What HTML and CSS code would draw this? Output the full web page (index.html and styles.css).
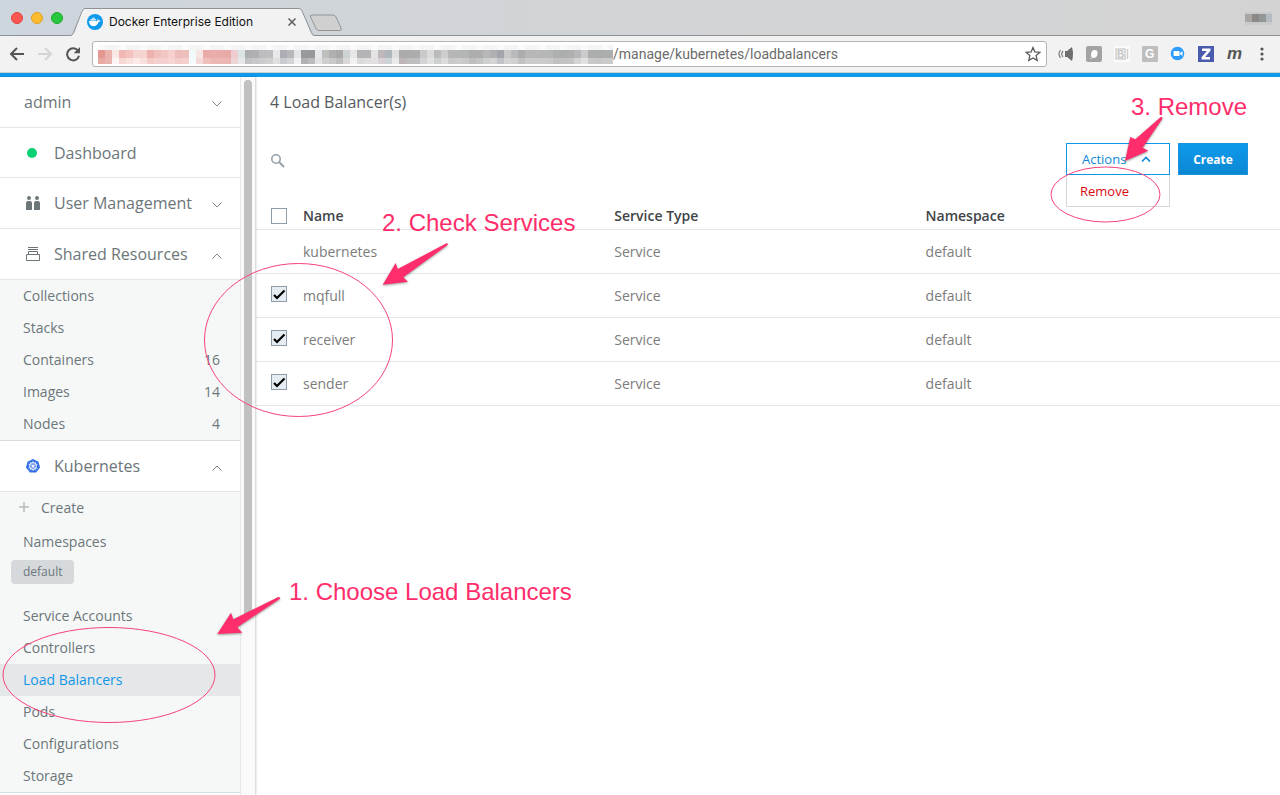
FILE: index.html
```html
<!DOCTYPE html>
<html lang="en">
<head>
<meta charset="utf-8">
<title>Docker Enterprise Edition</title>
<link rel="stylesheet" href="styles.css">
</head>
<body>
<header class="browser">
  <div class="tabstrip">
    <div class="lights"><span class="light red"></span><span class="light yellow"></span><span class="light green"></span></div>
    <div class="tab">
      <svg class="tab-shape" viewBox="0 0 243 28" preserveAspectRatio="none"><path d="M0 27.500C3 27 3.500 25 4.500 22.500L10.500 3.500Q11.500.5 14 .5H228Q230.500.5 231.500 3.500L238.500 22.500Q240 27 243 27.500V28H0Z" fill="#f2f2f2"/><path d="M0 27.500Q1.500 27 2.500 24.500L11 3.500Q12 .5 14 .5H228Q230 .5 231 3L240.500 24.500Q241.500 27.500 243 27.500" fill="none" stroke="#8f9295"/></svg>
      <svg class="favicon" viewBox="0 0 16 16"><circle cx="8" cy="8" r="8" fill="#0f9aec"/><path d="M2 7h8.500q.2-1.500-.3-2.500.8.1 1.300 1.700 1.500-.1 2.300.6-.7 1-2.200 1-1.200 4.400-5.400 4.400Q2.200 12 2 7zM3.300 5.200h5.600v1.300H3.300zM5.200 3.700h2.700v1H5.200z" fill="#fff"/></svg>
      <span class="tab-title">Docker Enterprise Edition</span>
      <button class="tab-close" aria-label="Close tab"><svg viewBox="0 0 8 8"><path d="M.5.5l7 7m0-7l-7 7" stroke="#5c5c5c" stroke-width="1.500"/></svg></button>
    </div>
    <button class="new-tab" aria-label="New tab"><svg viewBox="0 0 34 18"><path d="M3.500 1H24q2 0 3 2l5 11q1 2.500-1 2.500H10q-2 0-3-2L1.500 3Q.5 1 3.500 1z" fill="#d0d0d0" stroke="#929496"/></svg></button>
    <svg class="profile" viewBox="0 0 27 13"><path fill="#c9cacb" d="M0 0h27v13H0z"/><path fill="#a9a5a3" d="M0 2h7v8H0z"/><path fill="#8b8888" d="M7 2h7v8H7z"/><path fill="#949797" d="M14 2h7v8h-7z"/><path fill="#b4bbc0" d="M21 2h6v8h-6z"/></svg>
  </div>
  <div class="toolbar">
    <button class="nav-btn" aria-label="Back"><svg viewBox="0 0 16 16"><path d="M15 8H2.500M8 2L2 8l6 6" fill="none" stroke="#555" stroke-width="2"/></svg></button>
    <button class="nav-btn" aria-label="Forward"><svg viewBox="0 0 16 16"><path d="M1 8h12.500M8 2l6 6-6 6" fill="none" stroke="#d5d5d5" stroke-width="2"/></svg></button>
    <button class="nav-btn" aria-label="Reload"><svg viewBox="0 0 16 16"><path d="M13 4.800A6 6 0 1 0 14 9.800" fill="none" stroke="#555" stroke-width="2"/><path d="M15 1v6.300H8.700z" fill="#555"/></svg></button>
    <div class="omnibox">
      <div class="mosaic" id="mosaic"></div>
      <input class="url" type="text" aria-label="Address" value="/manage/kubernetes/loadbalancers">
      <svg class="star" viewBox="0 0 16 16"><path d="M8 1.500l1.900 4.500 4.900.4-3.700 3.200 1.100 4.800L8 11.900l-4.200 2.500 1.100-4.800L1.200 6.400 6.100 6z" fill="none" stroke="#5a5a5a" stroke-width="1.300"/></svg>
    </div>
    <div class="extensions">
      <svg viewBox="0 0 16 16"><path d="M7 5h2l5-4q2 7 0 14l-5-4H7z" fill="#6e6e6e"/><path d="M5 5q-2.500 3 0 6M2.500 4q-3 4 0 8" fill="none" stroke="#777" stroke-width="1.200"/></svg>
      <svg viewBox="0 0 16 16"><rect width="16" height="16" rx="2" fill="#a3a3a3"/><path d="M5 9q0-5 4-5 3 0 2.500 4-.5 4-4 4Q5 12 5 9z" fill="#fff"/><path d="M3.500 13l3-2-1 2z" fill="#ddd"/></svg>
      <svg viewBox="0 0 16 16"><rect width="16" height="16" fill="#fbfbfb"/><path d="M2 3h9v10H2zM13.500 3v10" fill="none" stroke="#cfcfcf" stroke-width="1.500"/><text x="3" y="12" class="ext-b">B</text></svg>
      <svg viewBox="0 0 16 16"><rect width="16" height="16" rx="1" fill="#bebebe"/><text x="3" y="12" class="ext-g">G</text></svg>
      <svg viewBox="0 0 16 16"><circle cx="7.500" cy="7.500" r="6.800" fill="#2d9cff"/><path d="M3.500 5h5q1 0 1 1v4h-5q-1 0-1-1zM10 7l2.500-2v5L10 8z" fill="#fff"/></svg>
      <svg viewBox="0 0 16 16"><rect width="16" height="16" fill="#4a5aad"/><path d="M4 2.500h8.500v2.300L7.200 11H12v2.500H3.500v-2.300L8.800 5H4z" fill="#fff"/></svg>
      <svg viewBox="0 0 16 16"><text x="1" y="13" class="ext-m">m</text></svg>
      <svg viewBox="0 0 16 16"><circle cx="8" cy="3" r="1.600" fill="#555"/><circle cx="8" cy="8" r="1.600" fill="#555"/><circle cx="8" cy="13" r="1.600" fill="#555"/></svg>
    </div>
  </div>
</header>
<div class="app">
  <nav class="sidebar">
    <div class="menu">
      <button class="section account"><span class="label">admin</span><svg class="chev" viewBox="0 0 10 6"><path d="M.5.5L5 5 9.500.5"/></svg></button>
      <a class="section home" href="#"><svg class="icon" viewBox="0 0 14 14"><circle cx="6" cy="7" r="5" fill="#0bd073"/></svg><span class="label">Dashboard</span></a>
      <button class="section"><svg class="icon" viewBox="0 0 14 14"><g fill="#6c7679"><circle cx="3" cy="2" r="2"/><circle cx="11" cy="2" r="2"/><path d="M0 14V7q0-2 2-2h2q2 0 2 2v7zM8 14V7q0-2 2-2h2q2 0 2 2v7z"/></g></svg><span class="label">User Management</span><svg class="chev" viewBox="0 0 10 6"><path d="M.5.5L5 5 9.500.5"/></svg></button>
      <button class="section"><svg class="icon" viewBox="0 0 14 14"><path d="M2 .5h10M2 2.500h10M2.500 7V4.500h9V7M.5 7.500h13v6H.5z" fill="none" stroke="#6c7679"/></svg><span class="label">Shared Resources</span><svg class="chev" viewBox="0 0 10 6"><path d="M.5 5.500L5 1l4.500 4.500"/></svg></button>
      <div class="group">
        <a class="item" href="#">Collections</a>
        <a class="item" href="#">Stacks</a>
        <a class="item" href="#">Containers<span>16</span></a>
        <a class="item" href="#">Images<span>14</span></a>
        <a class="item" href="#">Nodes<span>4</span></a>
      </div>
      <button class="section"><svg class="icon" viewBox="0 0 14 14"><path d="M7 0l5.500 2.700L14 8.600 10.200 13.600H3.800L0 8.600l1.500-5.900z" fill="#326de6"/><g fill="none" stroke="#fff" stroke-width=".9"><circle cx="7" cy="7" r="3.500"/><path d="M7 1.800V12M2.300 5l9.400 4.500M11.700 5L2.300 9.500M4 11.500L10 3M10 11.500L4 3" stroke-width=".6"/></g><circle cx="7" cy="7" r="1" fill="#fff"/></svg><span class="label">Kubernetes</span><svg class="chev" viewBox="0 0 10 6"><path d="M.5 5.500L5 1l4.500 4.500"/></svg></button>
      <div class="group">
        <a class="item create" href="#"><svg class="plus" viewBox="0 0 12 12"><path d="M6 1v10M1 6h10" stroke="#b5b9bb" stroke-width="1.500"/></svg>Create</a>
        <a class="item namespaces" href="#">Namespaces</a>
        <button class="chip">default</button>
        <a class="item" href="#">Service Accounts</a>
        <a class="item" href="#">Controllers</a>
        <a class="item active" href="#">Load Balancers</a>
        <a class="item" href="#">Pods</a>
        <a class="item" href="#">Configurations</a>
        <a class="item" href="#">Storage</a>
      </div>
    </div>
    <div class="track"><div class="thumb"></div></div>
  </nav>
  <main class="content">
    <h1>4 Load Balancer(s)</h1>
    <div class="controls">
      <button class="search" aria-label="Search"><svg viewBox="0 0 14 14"><circle cx="5" cy="5" r="4.200" fill="none" stroke="#94a0aa" stroke-width="1.600"/><path d="M8.300 8.300L13 13" stroke="#94a0aa" stroke-width="2"/></svg></button>
      <div class="dropdown">
        <button class="actions" aria-expanded="true">Actions<svg viewBox="0 0 10 6"><path d="M1 5.500l4-4 4 4" fill="none" stroke="#0f87d6" stroke-width="1.600"/></svg></button>
        <button class="option">Remove</button>
      </div>
      <button class="primary">Create</button>
    </div>
    <table>
      <thead><tr><th class="pick"><input type="checkbox" aria-label="Select all"></th><th class="third">Name</th><th class="third">Service Type</th><th>Namespace</th></tr></thead>
      <tbody>
        <tr><td></td><td>kubernetes</td><td>Service</td><td>default</td></tr>
        <tr><td><input type="checkbox" aria-label="mqfull" checked></td><td>mqfull</td><td>Service</td><td>default</td></tr>
        <tr><td><input type="checkbox" aria-label="receiver" checked></td><td>receiver</td><td>Service</td><td>default</td></tr>
        <tr><td><input type="checkbox" aria-label="sender" checked></td><td>sender</td><td>Service</td><td>default</td></tr>
      </tbody>
    </table>
  </main>
</div>
<svg class="annotations" viewBox="0 0 1280 795">
  <g class="rings">
    <ellipse cx="109" cy="675" rx="106" ry="47.500"/>
    <ellipse cx="298.500" cy="340" rx="94" ry="76.500"/>
    <ellipse cx="1105.500" cy="194.500" rx="54.500" ry="27.500"/>
  </g>
  <g class="arrows">
    <path d="M217.300 634L231 612.700 233.300 619.300 278.300 597Q280.500 597 280 598.700L237.300 627.300 242.300 632.700z"/>
    <path d="M382.700 284.700L395.700 263 397.700 269 446.500 243.300Q448.500 243 447.500 245L403.300 277.300 408 281.700z"/>
    <path d="M1125 161L1130.300 137 1135.300 139.300 1160.500 117.300Q1163 116.500 1162.300 118.700L1142.700 147.700 1148.300 150.700z"/>
  </g>
  <g class="notes">
    <text x="289" y="600">1. Choose Load Balancers</text>
    <text x="382" y="231">2. Check Services</text>
    <text x="1131" y="115">3. Remove</text>
  </g>
</svg>
<script src="script.js"></script>
</body>
</html>
```
FILE: styles.css
```css
* { box-sizing: border-box; }
body { margin: 0; height: 100vh; display: flex; flex-direction: column; overflow: hidden; position: relative; background: #fff; font-family: "Open Sans", sans-serif; color: #6c7679; }
button { font: inherit; color: inherit; background: none; border: 0; padding: 0; margin: 0; text-align: left; }
a { color: inherit; text-decoration: none; }
svg { display: block; flex: none; }

.browser { background: #f2f2f2; border-bottom: 4px solid #0f9aec; }
.tabstrip { display: flex; height: 36px; padding-right: 8px; background: linear-gradient(90deg, #cdd5dd, #d1d4d7 40%, #d3d3d3); border-bottom: 1px solid #8f9295; }
.lights { display: flex; gap: 8px; padding: 12px 8px 0 11px; }
.light { width: 12px; height: 12px; border-radius: 50%; }
.red { background: #fc5650; border: 1px solid #e2443e; }
.yellow { background: #fdbc2e; border: 1px solid #dfa023; }
.green { background: #27c840; border: 1px solid #1dac2b; }
.tab { position: relative; width: 243px; height: 28px; margin-top: 8px; display: flex; align-items: center; padding: 0 18px 0 16px; }
.tab-shape { position: absolute; inset: 0; width: 100%; height: 100%; }
.favicon { position: relative; width: 16px; height: 16px; }
.tab-title { position: relative; flex: 1; padding-left: 6px; font: 12px/16px Inter, sans-serif; color: #111; white-space: nowrap; }
.tab-close { position: relative; }
.tab-close svg { width: 8px; height: 8px; }
.new-tab { margin-left: -5px; align-self: flex-start; padding-top: 14px; }
.new-tab svg { width: 34px; height: 18px; }
.profile { width: 27px; height: 13px; margin: 12px 0 0 auto; }
.toolbar { display: flex; align-items: center; height: 37px; padding: 0 10px 0 9px; border-bottom: 1px solid #cfcfcf; }
.nav-btn { width: 28px; }
.nav-btn svg { width: 16px; height: 16px; }
.omnibox { flex: 1; display: flex; align-items: center; height: 26px; margin-left: -1px; padding: 0 5px; border: 1px solid #b4b4b4; border-radius: 3px; background: #fff; }
.mosaic { display: grid; grid-template-columns: repeat(74, 7px); grid-template-rows: 5px 8px 6px; width: 515px; overflow: hidden; flex: none; opacity: .9; }
.url { flex: 1; min-width: 0; border: 0; padding: 0; outline: 0; background: none; font: 14px/20px Roboto, sans-serif; color: #6b6b6b; }
.star { width: 16px; height: 16px; }
.extensions { display: flex; gap: 12px; margin-left: 11px; }
.extensions svg { width: 16px; height: 16px; overflow: visible; }
.ext-b { font: bold 10px "Liberation Sans", sans-serif; fill: #c4c4c4; }
.ext-g { font: bold 12px "Liberation Sans", sans-serif; fill: #fff; }
.ext-m { font: italic bold 17px "Liberation Sans", sans-serif; fill: #555; }

.app { flex: 1; min-height: 0; display: flex; }
.sidebar { flex: none; display: flex; position: relative; box-shadow: 1px 0 2px rgba(0,0,0,.2); }
.menu { width: 240px; overflow: hidden; }
.track { width: 15px; padding: 3px 0 0 3px; border-left: 1px solid #e8e8e8; background: #fafafa; }
.thumb { width: 8px; height: 75%; border-radius: 4px; background: #c1c1c1; }
.section { display: flex; align-items: center; width: 100%; height: 51px; padding: 0 18px 0 26px; border-bottom: 1px solid #e3e5e6; font-size: 16px; }
.account { padding-left: 24px; }
.account .label { padding-left: 0; }
.home { height: 50px; }
.label { flex: 1; padding-left: 14px; line-height: 22px; }
.icon { width: 14px; height: 14px; }
.chev { width: 10px; height: 6px; margin-top: 3px; fill: none; stroke: #7d8588; }
.group { background: #f6f8f8; border-bottom: 1px solid #dadddf; }
.item { display: flex; align-items: center; justify-content: space-between; height: 32px; padding: 0 20px 2px 23px; font-size: 14px; }
.active { background: #e6e7e9; color: #0f97e8; }
.create { justify-content: flex-start; padding-left: 18px; gap: 11px; }
.plus { width: 12px; height: 12px; }
.namespaces { margin-top: 2px; }
.chip { display: block; height: 24px; margin: 2px 0 16px 11px; padding: 0 12px 2px; border-radius: 4px; background: #d5d9dc; font-size: 12px; }

.content { flex: 1; min-width: 0; margin-left: 1px; padding-top: 14px; }
h1 { margin: 0 14px 30px; font-size: 16px; line-height: 22px; font-weight: 400; color: #555a5e; }
.controls { display: flex; align-items: center; gap: 8px; height: 32px; margin-bottom: 27px; padding: 0 32px 0 15px; }
.search { margin-right: auto; padding-top: 3px; }
.search svg { width: 14px; height: 14px; }
.dropdown { position: relative; width: 104px; height: 32px; }
.actions { display: flex; align-items: center; justify-content: space-between; width: 100%; height: 100%; padding: 0 18px 0 15px; border: 1px solid #0f97e8; background: #fff; color: #0f87d6; font-size: 13px; }
.actions svg { width: 10px; height: 6px; }
.option { position: absolute; top: 100%; left: 0; width: 100%; height: 32px; padding-left: 13px; border: 1px solid #d6d6d6; border-top: 0; background: #fff; color: #d8090f; font-size: 13px; }
.primary { width: 70px; height: 32px; border: 1px solid #1c92dc; background: linear-gradient(#0f9aec, #0b87d2); color: #fff; font-size: 12px; font-weight: 700; text-align: center; }
table { width: 100%; table-layout: fixed; border-collapse: separate; border-spacing: 0; font-size: 14px; }
th, td { padding: 0; text-align: left; border-bottom: 1px solid #e3e5e6; }
th { height: 28px; font-weight: 600; color: #414548; }
td { height: 44px; color: #7c7c7c; }
.pick { width: 47px; }
.third { width: 30.4%; }
input[type="checkbox"] { appearance: none; display: block; width: 16px; height: 16px; margin: 0 0 0 15px; border: 1px solid #8e9ba8; background: #fff; }
td input[type="checkbox"] { margin-bottom: 3px; }
input[type="checkbox"]:checked { background: #e6edf2 url("data:image/svg+xml,%3Csvg xmlns='http://www.w3.org/2000/svg' viewBox='0 0 14 14'%3E%3Cpath d='M2 8l3 3 7.500-7.500' fill='none' stroke='%23000' stroke-width='2.200'/%3E%3C/svg%3E"); }

.annotations { position: absolute; top: 0; left: 0; width: 1280px; height: 795px; pointer-events: none; }
.rings { fill: none; stroke: #f5437b; stroke-width: 1; }
.arrows { fill: #ff2d6b; filter: drop-shadow(0 1px 1px rgba(0,0,0,.4)); }
.notes { fill: #ff2d6b; font: 24px "Liberation Sans", sans-serif; }
```
FILE: script.js
```js
// Obscured host name: one colour per cell, [middle row, bottom row].
const cells = "e08e86e5a098 e9aaa5e8aca6 fae6e4fdf4f2 efb0acf5d4d0 f2bcb8f9dedb f4cfccfbe8e6 f4cfccf8dcda ecaaa6f3c6c2 f0bab6f4cccb f2c2bef4ccca f4ccc8f5d0ce edb6b4f3c8c6 edb8b6f4caca f2fafcf4fafc f8e4e2f4d8d4 e8a29eefb8b4 e8a4a2ecb0ac e8a4a2ecb0ac e6a19eecaeac ecc8cae8d0d0 d8e0e2e6e6e6 a4a6aabcbcbe a8a8acc2c2c4 b4b6b8c6c6c8 b8b8bacccccc e6e6e8dcdcdc a4a6acc4c6ca b0b0b4d0d0d2 e0e4e6f0f0f0 8c9092a8a8aa 8a8e90b4b4b6 e4e6eae0e0e0 b8bab8cacaca a8a8a8c4c4c4 a0a0a0b8b8b8 c8ced0d4d4d4 e4e4e4f0f0f0 acacb0d8d8d8 acacb0dcdcdc e0e0e0e0dce0 b8b0b4d4ccd0 a8b0b4c8d0d2 dcdcdce8e8e8 a2a2a4b6aeb2 a2a2a4b6b6b8 a2a4a4b8b8ba c4c4c6d0d0d2 d8d8d8dedede b4b4b4c8cccc c8c8c8d8d8d8 b0b0b0c4c4c4 acaeaec8c8c8 acaeaec4c4c4 a4a6a6b8b8b8 a6a6a8bebebe b0b0b0c8cccc a8a8acd0d0d0 9a9ca4bcbcc4 c4c4c4d0d0d0 b0b4b4cccccc a4a4a6bcbcbc b0b0b0c6c6c6 b0b0b0c6c6c8 aeb0b0c6c6c6 aeb0b0c4c4c4 a6a8a8bababa a4a6a6bcbcbc a6a8a8bebebe b0b0b2d0d0d0 c6c6c8dedede a4a6a6c4c4c4 a4a6a6c2c2c4 a4a6a6c6c6c6 a4a6a6c6c6c6".split(" ");
const mosaic = document.getElementById("mosaic");
const add = (color) => {
  const cell = document.createElement("span");
  cell.style.background = color;
  mosaic.append(cell);
};
cells.forEach((c, i) => add(i % 3 ? "#f4f3f3" : "#fafafa"));
cells.forEach((c) => add("#" + c.slice(0, 6)));
cells.forEach((c) => add("#" + c.slice(6)));
```
